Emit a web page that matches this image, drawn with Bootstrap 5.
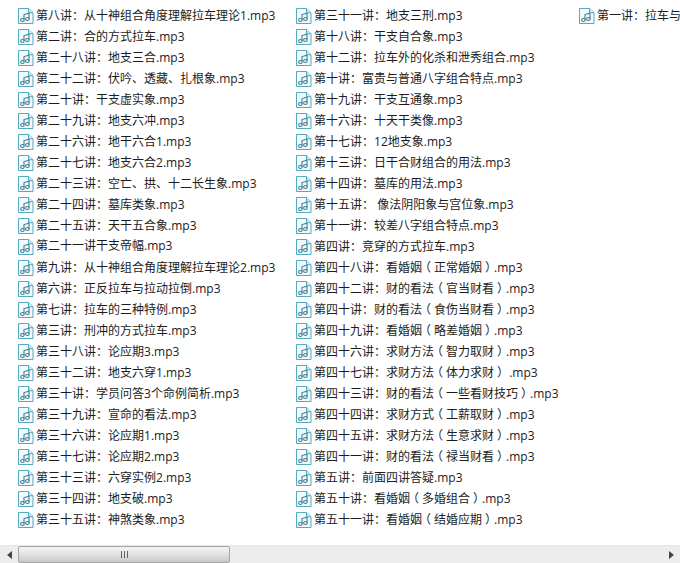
<!doctype html>
<html lang="zh-CN">
<head>
<meta charset="utf-8">
<title>mp3</title>
<link href="https://cdn.jsdelivr.net/npm/bootstrap@5.3.0/dist/css/bootstrap.min.css" rel="stylesheet">
<style>
html,body{height:563px;overflow:hidden;background:#fff}
body{font-family:"Open Sans","Noto Sans CJK SC",sans-serif;font-size:12px;color:#1c1c1c}
.file-pane{height:545px;padding:5px 0 0 18px;overflow:hidden}
.file-col{flex:0 0 auto;width:278px}
.file-col.second{width:283px}
.file-row{height:21px;line-height:21px}
.file-name{white-space:pre;margin-top:-2px}
.cn-colon{font-family:"Noto Sans CJK TC",sans-serif}
.cn-open,.cn-close{font-feature-settings:"halt";margin:0 3px}
.file-ico{width:16px;height:16px;flex:0 0 auto;margin:1px 2px 0 0}
.hbar{height:18px;background:#ededed;border-top:1px solid #e6e6e6}
.hbar-btn{width:18px;flex:0 0 auto}
.hbar-gap{flex:1 1 auto}
.hbar-thumb{width:212px;flex:0 0 auto;border:1px solid #a6a6a6;border-radius:2px;background:linear-gradient(#f4f4f4,#e2e2e2 50%,#c8c8c8)}
</style>
</head>
<body>
<svg width="0" height="0" class="d-block" aria-hidden="true"><symbol id="mp3" viewBox="0 0 16 17" preserveAspectRatio="none"><path d="M.5.5h10l4.500 4.500v11.500H.5z" fill="#f2fafc" stroke="#4ba6c2"/><path d="M10.500.5v4.500H15" fill="#cfeaf2" stroke="#4ba6c2"/><path d="M6 12.500V7l5-1.500v6" fill="none" stroke="#3f7f92" stroke-width="1.100"/><ellipse cx="4.400" cy="12.700" rx="1.800" ry="1.600" fill="none" stroke="#3f7f92" stroke-width="1.100"/><ellipse cx="9.400" cy="11.700" rx="1.800" ry="1.600" fill="none" stroke="#3f7f92" stroke-width="1.100"/></symbol></svg>
<main class="file-pane d-flex">
<div class="file-col">
<div class="file-row d-flex align-items-center"><svg class="file-ico"><use href="#mp3"/></svg><span class="file-name">第八讲<span class="cn-colon">&#xFF1A;</span>从十神组合角度理解拉车理论1.mp3</span></div>
<div class="file-row d-flex align-items-center"><svg class="file-ico"><use href="#mp3"/></svg><span class="file-name">第二讲<span class="cn-colon">&#xFF1A;</span>合的方式拉车.mp3</span></div>
<div class="file-row d-flex align-items-center"><svg class="file-ico"><use href="#mp3"/></svg><span class="file-name">第二十八讲<span class="cn-colon">&#xFF1A;</span>地支三合.mp3</span></div>
<div class="file-row d-flex align-items-center"><svg class="file-ico"><use href="#mp3"/></svg><span class="file-name">第二十二讲<span class="cn-colon">&#xFF1A;</span>伏吟、透藏、扎根象.mp3</span></div>
<div class="file-row d-flex align-items-center"><svg class="file-ico"><use href="#mp3"/></svg><span class="file-name">第二十讲<span class="cn-colon">&#xFF1A;</span>干支虚实象.mp3</span></div>
<div class="file-row d-flex align-items-center"><svg class="file-ico"><use href="#mp3"/></svg><span class="file-name">第二十九讲<span class="cn-colon">&#xFF1A;</span>地支六冲.mp3</span></div>
<div class="file-row d-flex align-items-center"><svg class="file-ico"><use href="#mp3"/></svg><span class="file-name">第二十六讲<span class="cn-colon">&#xFF1A;</span>地干六合1.mp3</span></div>
<div class="file-row d-flex align-items-center"><svg class="file-ico"><use href="#mp3"/></svg><span class="file-name">第二十七讲<span class="cn-colon">&#xFF1A;</span>地支六合2.mp3</span></div>
<div class="file-row d-flex align-items-center"><svg class="file-ico"><use href="#mp3"/></svg><span class="file-name">第二十三讲<span class="cn-colon">&#xFF1A;</span>空亡、拱、十二长生象.mp3</span></div>
<div class="file-row d-flex align-items-center"><svg class="file-ico"><use href="#mp3"/></svg><span class="file-name">第二十四讲<span class="cn-colon">&#xFF1A;</span>墓库类象.mp3</span></div>
<div class="file-row d-flex align-items-center"><svg class="file-ico"><use href="#mp3"/></svg><span class="file-name">第二十五讲<span class="cn-colon">&#xFF1A;</span>天干五合象.mp3</span></div>
<div class="file-row d-flex align-items-center"><svg class="file-ico"><use href="#mp3"/></svg><span class="file-name">第二十一讲干支帝幅.mp3</span></div>
<div class="file-row d-flex align-items-center"><svg class="file-ico"><use href="#mp3"/></svg><span class="file-name">第九讲<span class="cn-colon">&#xFF1A;</span>从十神组合角度理解拉车理论2.mp3</span></div>
<div class="file-row d-flex align-items-center"><svg class="file-ico"><use href="#mp3"/></svg><span class="file-name">第六讲<span class="cn-colon">&#xFF1A;</span>正反拉车与拉动拉倒.mp3</span></div>
<div class="file-row d-flex align-items-center"><svg class="file-ico"><use href="#mp3"/></svg><span class="file-name">第七讲<span class="cn-colon">&#xFF1A;</span>拉车的三种特例.mp3</span></div>
<div class="file-row d-flex align-items-center"><svg class="file-ico"><use href="#mp3"/></svg><span class="file-name">第三讲<span class="cn-colon">&#xFF1A;</span>刑冲的方式拉车.mp3</span></div>
<div class="file-row d-flex align-items-center"><svg class="file-ico"><use href="#mp3"/></svg><span class="file-name">第三十八讲<span class="cn-colon">&#xFF1A;</span>论应期3.mp3</span></div>
<div class="file-row d-flex align-items-center"><svg class="file-ico"><use href="#mp3"/></svg><span class="file-name">第三十二讲<span class="cn-colon">&#xFF1A;</span>地支六穿1.mp3</span></div>
<div class="file-row d-flex align-items-center"><svg class="file-ico"><use href="#mp3"/></svg><span class="file-name">第三十讲<span class="cn-colon">&#xFF1A;</span>学员问答3个命例简析.mp3</span></div>
<div class="file-row d-flex align-items-center"><svg class="file-ico"><use href="#mp3"/></svg><span class="file-name">第三十九讲<span class="cn-colon">&#xFF1A;</span>宣命的看法.mp3</span></div>
<div class="file-row d-flex align-items-center"><svg class="file-ico"><use href="#mp3"/></svg><span class="file-name">第三十六讲<span class="cn-colon">&#xFF1A;</span>论应期1.mp3</span></div>
<div class="file-row d-flex align-items-center"><svg class="file-ico"><use href="#mp3"/></svg><span class="file-name">第三十七讲<span class="cn-colon">&#xFF1A;</span>论应期2.mp3</span></div>
<div class="file-row d-flex align-items-center"><svg class="file-ico"><use href="#mp3"/></svg><span class="file-name">第三十三讲<span class="cn-colon">&#xFF1A;</span>六穿实例2.mp3</span></div>
<div class="file-row d-flex align-items-center"><svg class="file-ico"><use href="#mp3"/></svg><span class="file-name">第三十四讲<span class="cn-colon">&#xFF1A;</span>地支破.mp3</span></div>
<div class="file-row d-flex align-items-center"><svg class="file-ico"><use href="#mp3"/></svg><span class="file-name">第三十五讲<span class="cn-colon">&#xFF1A;</span>神煞类象.mp3</span></div>
</div>
<div class="file-col second">
<div class="file-row d-flex align-items-center"><svg class="file-ico"><use href="#mp3"/></svg><span class="file-name">第三十一讲<span class="cn-colon">&#xFF1A;</span>地支三刑.mp3</span></div>
<div class="file-row d-flex align-items-center"><svg class="file-ico"><use href="#mp3"/></svg><span class="file-name">第十八讲<span class="cn-colon">&#xFF1A;</span>干支自合象.mp3</span></div>
<div class="file-row d-flex align-items-center"><svg class="file-ico"><use href="#mp3"/></svg><span class="file-name">第十二讲<span class="cn-colon">&#xFF1A;</span>拉车外的化杀和泄秀组合.mp3</span></div>
<div class="file-row d-flex align-items-center"><svg class="file-ico"><use href="#mp3"/></svg><span class="file-name">第十讲<span class="cn-colon">&#xFF1A;</span>富贵与普通八字组合特点.mp3</span></div>
<div class="file-row d-flex align-items-center"><svg class="file-ico"><use href="#mp3"/></svg><span class="file-name">第十九讲<span class="cn-colon">&#xFF1A;</span>干支互通象.mp3</span></div>
<div class="file-row d-flex align-items-center"><svg class="file-ico"><use href="#mp3"/></svg><span class="file-name">第十六讲<span class="cn-colon">&#xFF1A;</span>十天干类像.mp3</span></div>
<div class="file-row d-flex align-items-center"><svg class="file-ico"><use href="#mp3"/></svg><span class="file-name">第十七讲<span class="cn-colon">&#xFF1A;</span>12地支象.mp3</span></div>
<div class="file-row d-flex align-items-center"><svg class="file-ico"><use href="#mp3"/></svg><span class="file-name">第十三讲<span class="cn-colon">&#xFF1A;</span>日干合财组合的用法.mp3</span></div>
<div class="file-row d-flex align-items-center"><svg class="file-ico"><use href="#mp3"/></svg><span class="file-name">第十四讲<span class="cn-colon">&#xFF1A;</span>墓库的用法.mp3</span></div>
<div class="file-row d-flex align-items-center"><svg class="file-ico"><use href="#mp3"/></svg><span class="file-name">第十五讲<span class="cn-colon">&#xFF1A;</span> 像法阴阳象与宫位象.mp3</span></div>
<div class="file-row d-flex align-items-center"><svg class="file-ico"><use href="#mp3"/></svg><span class="file-name">第十一讲<span class="cn-colon">&#xFF1A;</span>较差八字组合特点.mp3</span></div>
<div class="file-row d-flex align-items-center"><svg class="file-ico"><use href="#mp3"/></svg><span class="file-name">第四讲<span class="cn-colon">&#xFF1A;</span>竞穿的方式拉车.mp3</span></div>
<div class="file-row d-flex align-items-center"><svg class="file-ico"><use href="#mp3"/></svg><span class="file-name">第四十八讲<span class="cn-colon">&#xFF1A;</span>看婚姻<span class="cn-open">&#xFF08;</span>正常婚姻<span class="cn-close">&#xFF09;</span>.mp3</span></div>
<div class="file-row d-flex align-items-center"><svg class="file-ico"><use href="#mp3"/></svg><span class="file-name">第四十二讲<span class="cn-colon">&#xFF1A;</span>财的看法<span class="cn-open">&#xFF08;</span>官当财看<span class="cn-close">&#xFF09;</span>.mp3</span></div>
<div class="file-row d-flex align-items-center"><svg class="file-ico"><use href="#mp3"/></svg><span class="file-name">第四十讲<span class="cn-colon">&#xFF1A;</span>财的看法<span class="cn-open">&#xFF08;</span>食伤当财看<span class="cn-close">&#xFF09;</span>.mp3</span></div>
<div class="file-row d-flex align-items-center"><svg class="file-ico"><use href="#mp3"/></svg><span class="file-name">第四十九讲<span class="cn-colon">&#xFF1A;</span>看婚姻<span class="cn-open">&#xFF08;</span>略差婚姻<span class="cn-close">&#xFF09;</span>.mp3</span></div>
<div class="file-row d-flex align-items-center"><svg class="file-ico"><use href="#mp3"/></svg><span class="file-name">第四十六讲<span class="cn-colon">&#xFF1A;</span>求财方法<span class="cn-open">&#xFF08;</span>智力取财<span class="cn-close">&#xFF09;</span>.mp3</span></div>
<div class="file-row d-flex align-items-center"><svg class="file-ico"><use href="#mp3"/></svg><span class="file-name">第四十七讲<span class="cn-colon">&#xFF1A;</span>求财方法<span class="cn-open">&#xFF08;</span>体力求财<span class="cn-close">&#xFF09;</span> .mp3</span></div>
<div class="file-row d-flex align-items-center"><svg class="file-ico"><use href="#mp3"/></svg><span class="file-name">第四十三讲<span class="cn-colon">&#xFF1A;</span>财的看法<span class="cn-open">&#xFF08;</span>一些看财技巧<span class="cn-close">&#xFF09;</span>.mp3</span></div>
<div class="file-row d-flex align-items-center"><svg class="file-ico"><use href="#mp3"/></svg><span class="file-name">第四十四讲<span class="cn-colon">&#xFF1A;</span>求财方式<span class="cn-open">&#xFF08;</span>工薪取财<span class="cn-close">&#xFF09;</span>.mp3</span></div>
<div class="file-row d-flex align-items-center"><svg class="file-ico"><use href="#mp3"/></svg><span class="file-name">第四十五讲<span class="cn-colon">&#xFF1A;</span>求财方法<span class="cn-open">&#xFF08;</span>生意求财<span class="cn-close">&#xFF09;</span>.mp3</span></div>
<div class="file-row d-flex align-items-center"><svg class="file-ico"><use href="#mp3"/></svg><span class="file-name">第四十一讲<span class="cn-colon">&#xFF1A;</span>财的看法<span class="cn-open">&#xFF08;</span>禄当财看<span class="cn-close">&#xFF09;</span>.mp3</span></div>
<div class="file-row d-flex align-items-center"><svg class="file-ico"><use href="#mp3"/></svg><span class="file-name">第五讲<span class="cn-colon">&#xFF1A;</span>前面四讲答疑.mp3</span></div>
<div class="file-row d-flex align-items-center"><svg class="file-ico"><use href="#mp3"/></svg><span class="file-name">第五十讲<span class="cn-colon">&#xFF1A;</span>看婚姻<span class="cn-open">&#xFF08;</span>多婚组合<span class="cn-close">&#xFF09;</span>.mp3</span></div>
<div class="file-row d-flex align-items-center"><svg class="file-ico"><use href="#mp3"/></svg><span class="file-name">第五十一讲<span class="cn-colon">&#xFF1A;</span>看婚姻<span class="cn-open">&#xFF08;</span>结婚应期<span class="cn-close">&#xFF09;</span>.mp3</span></div>
</div>
<div class="file-col">
<div class="file-row d-flex align-items-center"><svg class="file-ico"><use href="#mp3"/></svg><span class="file-name">第一讲<span class="cn-colon">&#xFF1A;</span>拉车与</span></div>
</div>
</main>
<div class="hbar d-flex">
<div class="hbar-btn d-flex align-items-center justify-content-center"><svg width="5" height="8"><path d="M5 0v8L0 4z" fill="#444"/></svg></div>
<div class="hbar-thumb d-flex align-items-center justify-content-center"><svg width="7" height="7"><path d="M.5 0v7M3.500 0v7M6.500 0v7" stroke="#666"/></svg></div>
<div class="hbar-gap"></div>
<div class="hbar-btn d-flex align-items-center justify-content-center"><svg width="5" height="8"><path d="M0 0v8l5-4z" fill="#444"/></svg></div>
</div>
<script src="https://cdn.jsdelivr.net/npm/bootstrap@5.3.0/dist/js/bootstrap.bundle.min.js"></script>
</body>
</html>
